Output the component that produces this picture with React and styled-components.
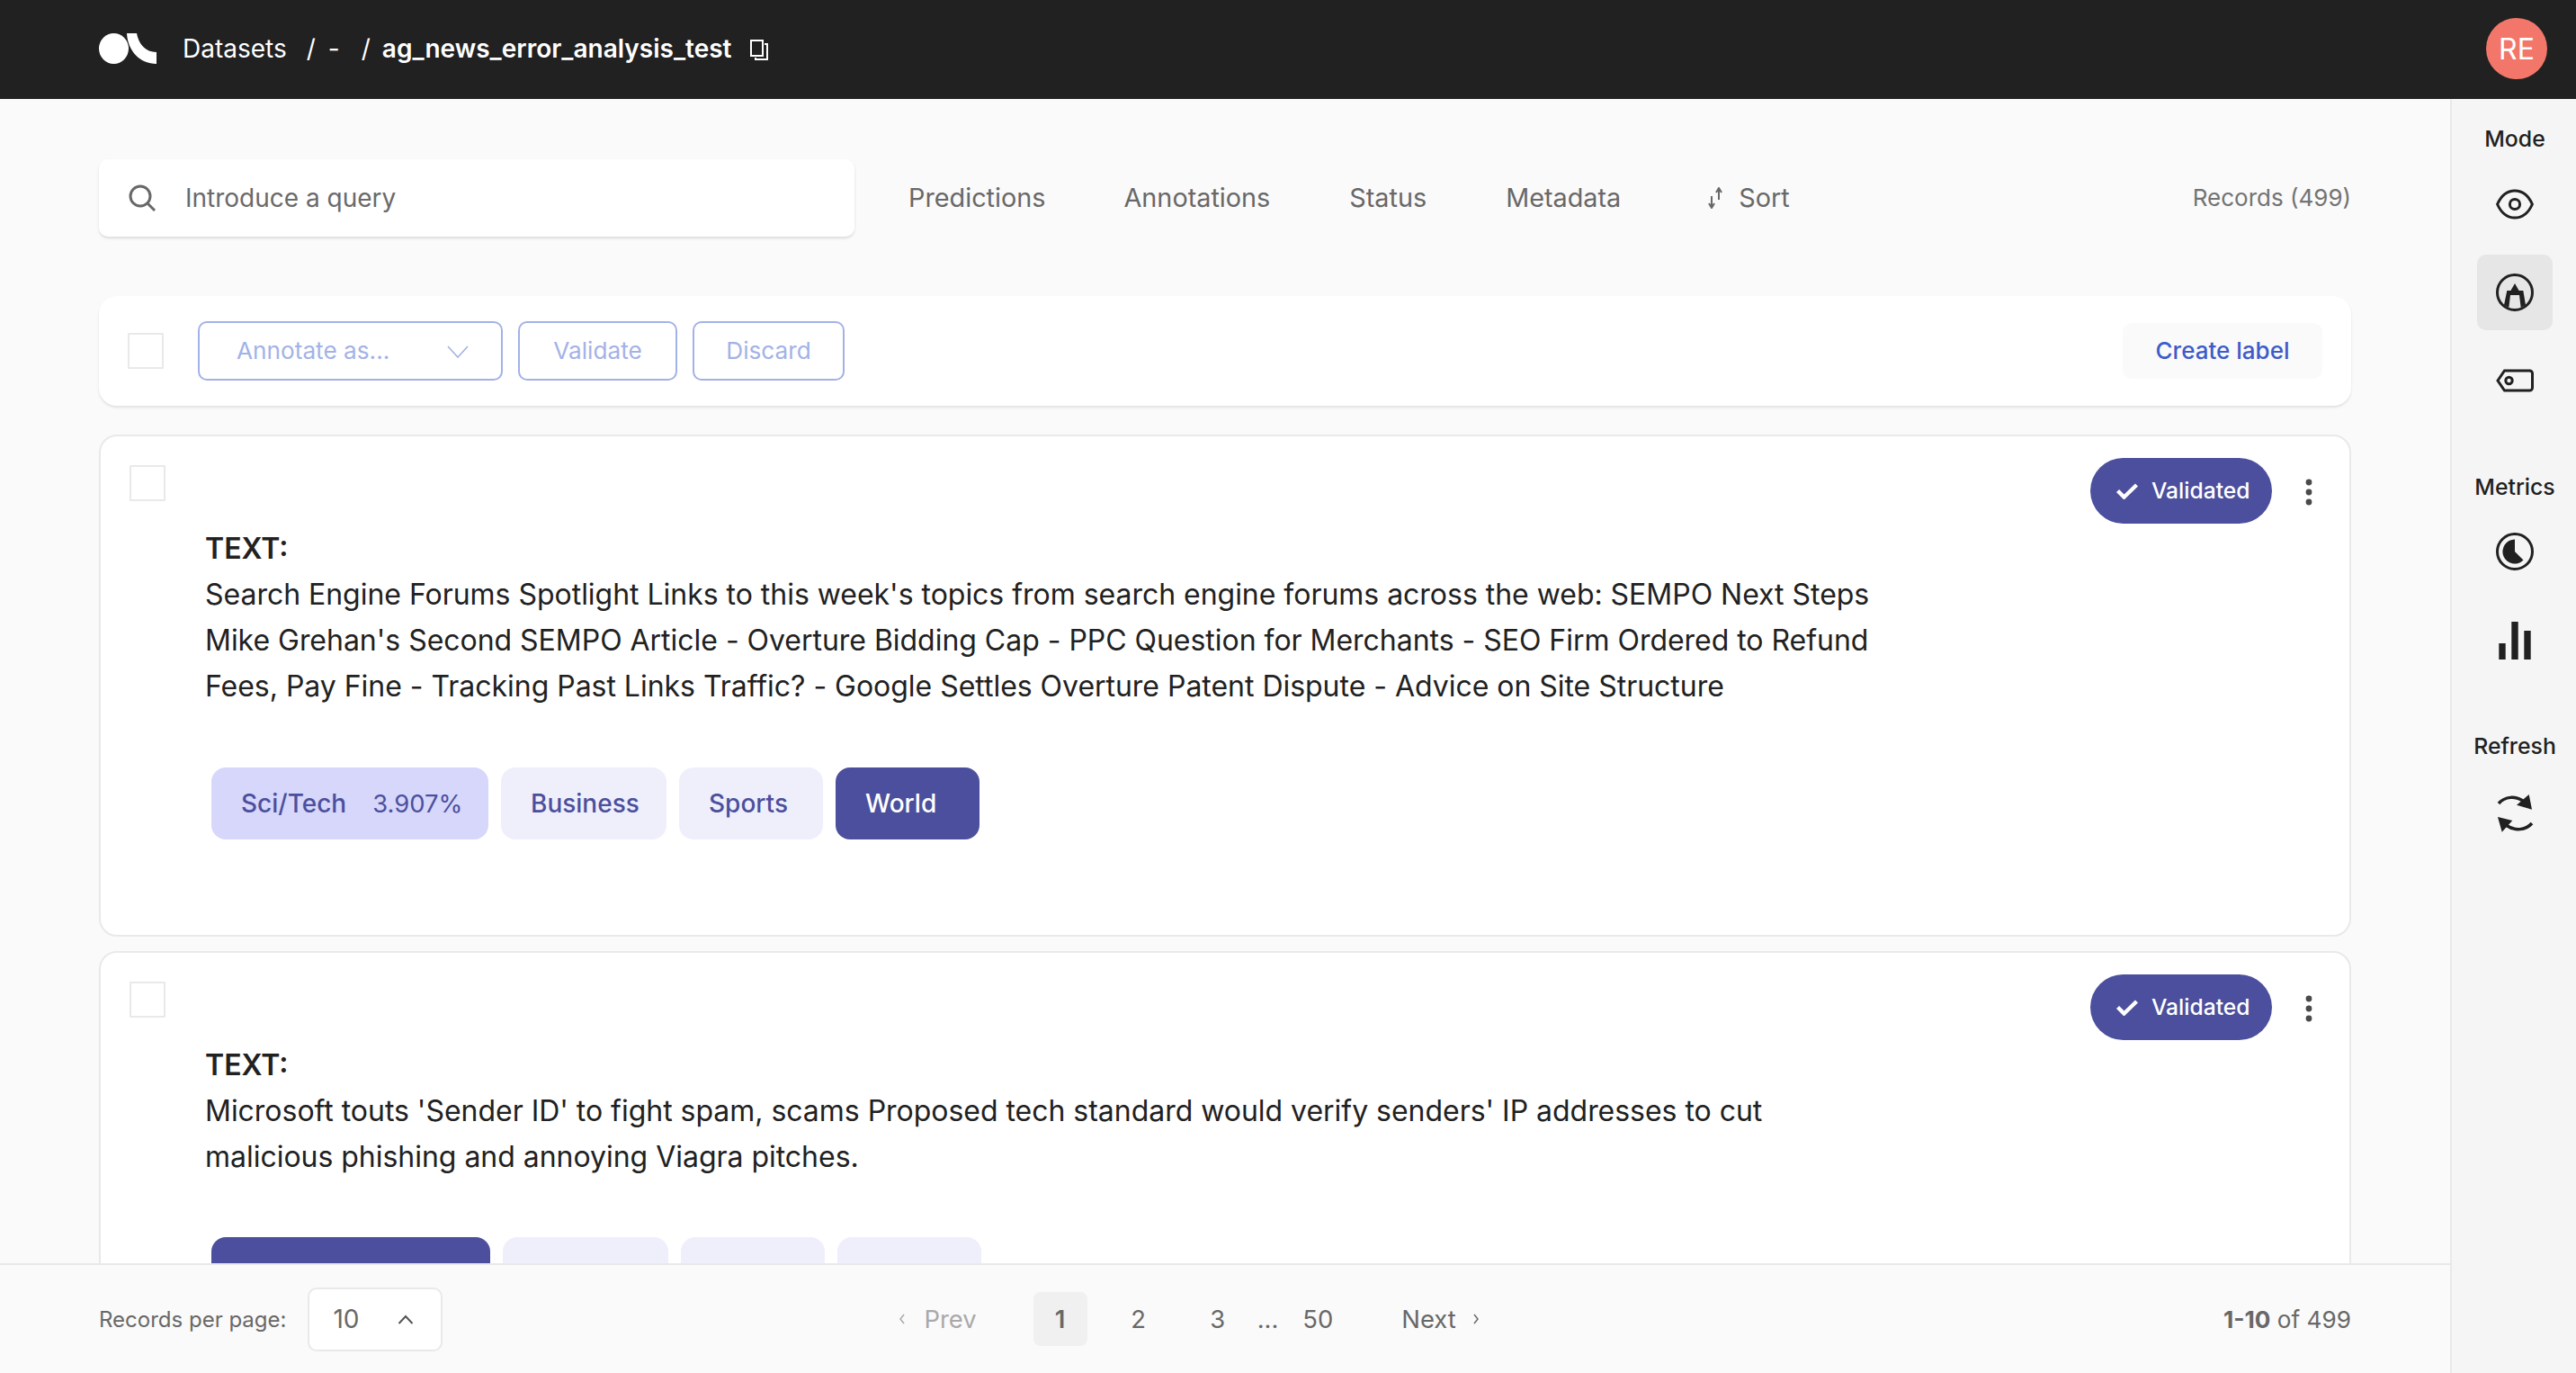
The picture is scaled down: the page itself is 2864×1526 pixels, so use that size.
import React from 'react';
import styled, { createGlobalStyle } from 'styled-components';

const Global = createGlobalStyle`
  html, body { margin: 0; padding: 0; height: 100%; background: #fafafa; }
  * { box-sizing: border-box; }
  body { font-family: Inter, "Noto Sans", sans-serif; color: #212121; -webkit-font-smoothing: antialiased; }
`;

const Page = styled.div`
  height: 100vh;
  display: flex;
  flex-direction: column;
  overflow: hidden;
`;
const TopBar = styled.header`
  height: 110px;
  flex: none;
  background: #212121;
  color: #fff;
  display: flex;
  align-items: center;
  padding: 0 32px 2px 110px;
`;
const Logo = styled.svg`
  width: 65px;
  height: 34px;
  flex: none;
`;
const Crumbs = styled.nav`
  display: flex;
  align-items: center;
  margin-left: 28px;
  font-size: 28px;
  line-height: 34px;
  color: #fff;
`;
const Sep = styled.span`
  margin: 0 ${(p) => p.$right}px 0 ${(p) => p.$left}px;
  font-weight: 400;
`;
const Current = styled.strong`
  font-weight: 600;
`;
const CopyIcon = styled.svg`
  width: 20px;
  height: 23px;
  margin: 2px 0 0 20px;
`;
const Avatar = styled.div`
  margin-left: auto;
  width: 68px;
  height: 68px;
  border-radius: 50%;
  background: #f2776a;
  color: #fff;
  display: flex;
  align-items: center;
  justify-content: center;
  font-size: 32px;
`;
const Body = styled.div`
  flex: 1;
  min-height: 0;
  display: flex;
`;
const Main = styled.main`
  flex: 1;
  min-width: 0;
  display: flex;
  flex-direction: column;
`;
const Scroll = styled.div`
  flex: 1;
  min-height: 0;
  overflow: hidden;
  padding: 67px 110px 0;
`;
const FilterRow = styled.div`
  display: flex;
  align-items: center;
  height: 86px;
  color: #686868;
  font-size: 28.8px;
`;
const Search = styled.div`
  width: 840px;
  height: 86px;
  flex: none;
  background: #fff;
  border-radius: 10px;
  box-shadow: 0 2px 3px rgba(0, 0, 0, 0.12);
  display: flex;
  align-items: center;
  padding-left: 32px;
  color: #6a6a6a;
  font-size: 28px;
`;
const SearchIcon = styled.svg`
  width: 32px;
  height: 32px;
  margin-right: 32px;
`;
const Filter = styled.span`
  margin-left: ${(p) => p.$left}px;
  padding-bottom: 2px;
  display: inline-flex;
  align-items: center;
`;
const SortIcon = styled.svg`
  width: 18px;
  height: 24px;
  margin: 2px 17px 0 0;
`;
const RecordCount = styled.span`
  margin-left: auto;
  padding-bottom: 2px;
  font-size: 26px;
  color: #737373;
`;
const Toolbar = styled.section`
  margin-top: 66px;
  height: 122px;
  background: #fff;
  border-radius: 20px;
  box-shadow: 0 2px 3px rgba(0, 0, 0, 0.1);
  display: flex;
  align-items: center;
  padding: 0 32px;
`;
const Check = styled.span`
  display: block;
  width: 40px;
  height: 40px;
  flex: none;
  background: #fff;
  border: 2px solid #e9e9e9;
  border-radius: 1px;
`;
const OutlineBtn = styled.div`
  height: 66px;
  width: ${(p) => p.$w}px;
  margin-left: ${(p) => p.$left}px;
  border: 2px solid #a3b2e6;
  border-radius: 10px;
  color: #a3b2e6;
  font-size: 26.2px;
  display: flex;
  align-items: center;
  justify-content: ${(p) => (p.$between ? 'space-between' : 'center')};
  padding: ${(p) => (p.$between ? '0 36px 2px 41px' : '0 0 2px')};
`;
const DownCaret = styled.svg`
  width: 24px;
  height: 14px;
  margin-top: 4px;
`;
const UpCaret = styled.svg`
  width: 18px;
  height: 11px;
`;
const CreateLabel = styled.div`
  margin-left: auto;
  width: 222px;
  height: 62px;
  background: #fafafa;
  border-radius: 10px;
  color: #3e5cc9;
  font-size: 26px;
  font-weight: 500;
  display: flex;
  align-items: center;
  justify-content: center;
  padding-bottom: 2px;
`;
const Card = styled.article`
  margin-top: ${(p) => p.$top}px;
  height: ${(p) => p.$h}px;
  background: #fff;
  border: 2px solid #e9e9e9;
  border-radius: 20px;
  padding: 32px 30px 0 32px;
  display: grid;
  grid-template-columns: 40px 1fr auto;
  grid-template-rows: auto auto;
  align-content: start;
`;
const CardRight = styled.div`
  grid-column: 3;
  grid-row: 1;
  display: flex;
  align-items: flex-start;
  margin-top: -8px;
`;
const Status = styled.div`
  width: 202px;
  height: 73px;
  border-radius: 37px;
  background: #4c4f9d;
  color: #fff;
  font-size: 24.6px;
  font-weight: 500;
  display: flex;
  align-items: center;
  padding: 0 0 2px 29px;
`;
const CheckMark = styled.svg`
  width: 24px;
  height: 18px;
  margin: 2px 15px 0 0;
`;
const Dots = styled.svg`
  width: 8px;
  height: 30px;
  margin: 23px 11px 0 37px;
`;
const Record = styled.div`
  grid-column: 1 / -1;
  grid-row: 2;
  margin-top: 2px;
  padding-left: 84px;
`;
const Label = styled.div`
  font-weight: 600;
  font-size: 32px;
  line-height: 51px;
`;
const Text = styled.p`
  margin: 0;
  width: 1880px;
  font-size: 32px;
  line-height: 51.2px;
  letter-spacing: -0.025px;
  color: #212121;
`;
const Tags = styled.div`
  display: flex;
  gap: 14px;
  margin: 64px 0 0 7px;
`;
const Tag = styled.div`
  height: 80px;
  width: ${(p) => p.$w}px;
  flex: none;
  border-radius: 16px;
  background: ${(p) => (p.$state === 'on' ? '#4c4f9d' : p.$state === 'pred' ? '#d6d7fb' : '#eeeffb')};
  color: ${(p) => (p.$state === 'on' ? '#fff' : '#4c4f9d')};
  font-size: 28px;
  font-weight: 500;
  display: flex;
  align-items: center;
  gap: 29px;
  padding-left: 33px;
`;
const Score = styled.span`
  font-size: 27.4px;
  font-weight: 400;
`;
const Footer = styled.footer`
  flex: none;
  height: 122px;
  border-top: 2px solid #e9e9e9;
  background: #fafafa;
  display: flex;
  align-items: center;
  padding: 0 110px;
  color: #686868;
  font-size: 27.4px;
`;
const PerPage = styled.span`
  font-size: 24px;
`;
const PerSelect = styled.div`
  margin-left: 24px;
  width: 150px;
  height: 71px;
  background: #fff;
  border: 2px solid #e9e9e9;
  border-radius: 10px;
  display: flex;
  align-items: center;
  justify-content: space-between;
  padding: 0 30px 0 26px;
  font-size: 28px;
`;
const Pager = styled.div`
  display: flex;
  align-items: center;
  margin-left: 507px;
`;
const PagerLink = styled.span`
  display: inline-flex;
  align-items: center;
  color: ${(p) => (p.$off ? '#a9a9a9' : '#686868')};
  margin-left: ${(p) => p.$left || 0}px;
`;
const PageNo = styled.span`
  width: 60px;
  height: 60px;
  margin-left: ${(p) => p.$left || 0}px;
  border-radius: 8px;
  display: flex;
  align-items: center;
  justify-content: center;
  background: ${(p) => (p.$on ? '#f0f0f0' : 'transparent')};
  font-weight: ${(p) => (p.$on ? 600 : 400)};
`;
const SmallChevron = styled.svg`
  width: 8px;
  height: 12px;
  margin: ${(p) => (p.$after ? '0 0 0 18px' : '0 20px 0 0')};
`;
const Range = styled.span`
  margin-left: auto;
  font-size: 26.2px;
  b { font-weight: 700; }
`;
const Side = styled.aside`
  flex: none;
  width: 140px;
  background: #f5f5f5;
  border-left: 2px solid #e9e9e9;
  display: flex;
  flex-direction: column;
  align-items: center;
  padding: 30px 0 0 2px;
`;
const SideTitle = styled.div`
  font-size: 24.8px;
  font-weight: 500;
  line-height: 28px;
  margin-top: ${(p) => p.$top || 0}px;
`;
const SideBtn = styled.div`
  width: 84px;
  height: 84px;
  flex: none;
  margin-top: ${(p) => p.$top || 0}px;
  border-radius: 10px;
  background: ${(p) => (p.$on ? '#e6e6e6' : 'transparent')};
  display: flex;
  align-items: center;
  justify-content: center;
`;
const SideIcon = styled.svg`
  width: 42px;
  height: 42px;
  color: #212121;
  display: block;
`;

function Item({ top, h, text, tags }) {
  return (
    <Card $top={top} $h={h}>
      <Check />
      <CardRight>
        <Status>
          <CheckMark viewBox="0 0 24 18" fill="none" stroke="#fff" strokeWidth="4.4">
            <path d="M1.5 8.5l7 7L22.5 2" />
          </CheckMark>
          Validated
        </Status>
        <Dots viewBox="0 0 8 30" fill="#4a4a4a">
          <circle cx="4" cy="4" r="3.4" />
          <circle cx="4" cy="15" r="3.4" />
          <circle cx="4" cy="26" r="3.4" />
        </Dots>
      </CardRight>
      <Record>
        <Label>TEXT:</Label>
        <Text>{text}</Text>
        <Tags>
          {tags.map((t) => (
            <Tag key={t.id} $w={t.w} $state={t.state}>
              {t.name}
              {t.score && <Score>{t.score}</Score>}
            </Tag>
          ))}
        </Tags>
      </Record>
    </Card>
  );
}

export default function App() {
  return (
    <Page>
      <Global />
      <TopBar>
        <Logo viewBox="0 0 65 34">
          <ellipse cx="16.5" cy="17" rx="16.5" ry="17" fill="#fff" />
          <path d="M31 0h11C44 12 52 21 64 21V34C46 34 32 20 31 0z" fill="#fff" />
        </Logo>
        <Crumbs>
          <span>Datasets</span>
          <Sep $left={22} $right={14}>/</Sep>
          <span>-</span>
          <Sep $left={24} $right={13}>/</Sep>
          <Current>ag_news_error_analysis_test</Current>
          <CopyIcon viewBox="0 0 20 23" fill="none" stroke="#fff" strokeWidth="2">
            <rect x="1" y="1" width="13" height="17" />
            <path d="M16 5h3v17H6v-2" />
          </CopyIcon>
        </Crumbs>
        <Avatar>RE</Avatar>
      </TopBar>
      <Body>
        <Main>
          <Scroll>
            <FilterRow>
              <Search>
                <SearchIcon viewBox="0 0 32 32" fill="none" stroke="#686868" strokeWidth="3">
                  <circle cx="14" cy="14" r="11" />
                  <path d="M22 22l8 8" />
                </SearchIcon>
                Introduce a query
              </Search>
              <Filter $left={60}>Predictions</Filter>
              <Filter $left={87}>Annotations</Filter>
              <Filter $left={88}>Status</Filter>
              <Filter $left={88}>Metadata</Filter>
              <Filter $left={96}>
                <SortIcon viewBox="0 0 18 24" fill="none" stroke="#686868" strokeWidth="2">
                  <path d="M5 10v12M2 18l3 5 3-5M13 14V2M10 6l3-5 3 5" />
                </SortIcon>
                Sort
              </Filter>
              <RecordCount>Records (499)</RecordCount>
            </FilterRow>
            <Toolbar>
              <Check />
              <OutlineBtn $w={339} $left={38} $between>
                Annotate as...
                <DownCaret viewBox="0 0 24 14" fill="none" stroke="#a3b2e6" strokeWidth="1.6">
                  <path d="M1 1l11 12L23 1" />
                </DownCaret>
              </OutlineBtn>
              <OutlineBtn $w={177} $left={17}>Validate</OutlineBtn>
              <OutlineBtn $w={169} $left={17}>Discard</OutlineBtn>
              <CreateLabel>Create label</CreateLabel>
            </Toolbar>
            <Item
              top={32}
              h={558}
              text="Search Engine Forums Spotlight Links to this week's topics from search engine forums across the web: SEMPO Next Steps Mike Grehan's Second SEMPO Article - Overture Bidding Cap - PPC Question for Merchants - SEO Firm Ordered to Refund Fees, Pay Fine - Tracking Past Links Traffic? - Google Settles Overture Patent Dispute - Advice on Site Structure"
              tags={[
                { id: 'sci', name: 'Sci/Tech', score: '3.907%', w: 308, state: 'pred' },
                { id: 'bus', name: 'Business', w: 184 },
                { id: 'spo', name: 'Sports', w: 160 },
                { id: 'wor', name: 'World', w: 160, state: 'on' },
              ]}
            />
            <Item
              top={16}
              h={558}
              text="Microsoft touts 'Sender ID' to fight spam, scams Proposed tech standard would verify senders' IP addresses to cut malicious phishing and annoying Viagra pitches."
              tags={[
                { id: 'a', w: 310, state: 'on' },
                { id: 'b', w: 184 },
                { id: 'c', w: 160 },
                { id: 'd', w: 160 },
              ]}
            />
          </Scroll>
          <Footer>
            <PerPage>Records per page:</PerPage>
            <PerSelect>
              10
              <UpCaret viewBox="0 0 18 11" fill="none" stroke="#555" strokeWidth="2">
                <path d="M1.5 10L9 2l7.5 8" />
              </UpCaret>
            </PerSelect>
            <Pager>
              <PagerLink $off>
                <SmallChevron viewBox="0 0 8 12" fill="none" stroke="#a9a9a9" strokeWidth="1.5">
                  <path d="M6 1L2 6l4 5" />
                </SmallChevron>
                Prev
              </PagerLink>
              <PageNo $on $left={63}>1</PageNo>
              <PageNo $left={27}>2</PageNo>
              <PageNo $left={28}>3</PageNo>
              <PagerLink $left={14}>...</PagerLink>
              <PagerLink $left={27}>50</PagerLink>
              <PagerLink $left={76}>
                Next
                <SmallChevron $after viewBox="0 0 8 12" fill="none" stroke="#686868" strokeWidth="1.5">
                  <path d="M2 1l4 5-4 5" />
                </SmallChevron>
              </PagerLink>
            </Pager>
            <Range><b>1-10</b> of 499</Range>
          </Footer>
        </Main>
        <Side>
          <SideTitle>Mode</SideTitle>
          <SideBtn $top={17}>
            <SideIcon viewBox="0 0 42 42" fill="none" stroke="currentColor" strokeWidth="3">
              <path d="M1.6 21C6 11 13 6 21 6s15 5 19.4 15C36 31 29 36 21 36S6 31 1.6 21z" />
              <circle cx="21" cy="21" r="5.6" />
            </SideIcon>
          </SideBtn>
          <SideBtn $top={14} $on>
            <SideIcon viewBox="0 0 42 42" fill="none">
              <circle cx="21" cy="21" r="19.5" stroke="currentColor" strokeWidth="3" />
              <path
                fillRule="evenodd"
                fill="currentColor"
                d="M21 11l4.6 8h4.7L33 35l-5.3 3L26 24H16l-1.7 14L9 35l3.3-16h4.1z"
              />
            </SideIcon>
          </SideBtn>
          <SideBtn $top={14}>
            <SideIcon viewBox="0 0 42 42" fill="none" stroke="currentColor" strokeWidth="3">
              <path d="M2 21l7.5-11H37.5a3 3 0 0 1 3 3v16a3 3 0 0 1-3 3H9.5z" />
              <circle cx="14.5" cy="21" r="3.7" />
            </SideIcon>
          </SideBtn>
          <SideTitle $top={62}>Metrics</SideTitle>
          <SideBtn $top={16}>
            <SideIcon viewBox="0 0 42 42" fill="none">
              <circle cx="21" cy="21" r="19.5" stroke="currentColor" strokeWidth="3" />
              <path d="M21 7.5V21l9.5 9.5A13.5 13.5 0 1 1 21 7.5z" fill="currentColor" />
            </SideIcon>
          </SideBtn>
          <SideBtn $top={15}>
            <SideIcon viewBox="0 0 42 42" fill="currentColor">
              <rect x="3.3" y="24" width="7.4" height="18" />
              <rect x="17.3" y="0" width="7.4" height="42" />
              <rect x="31.3" y="10" width="7.4" height="32" />
            </SideIcon>
          </SideBtn>
          <SideTitle $top={61}>Refresh</SideTitle>
          <SideBtn $top={19}>
            <SideIcon viewBox="0 0 42 42" fill="none">
              <path d="M3 10C10 2 22 1 31 8" stroke="currentColor" strokeWidth="3.5" />
              <path d="M36.7 0L40 16.7 23 11.7z" fill="currentColor" />
              <path d="M40 32C33 40 21 41 11 34" stroke="currentColor" strokeWidth="3.5" />
              <path d="M2 25l4.7 16.7L18.3 29z" fill="currentColor" />
            </SideIcon>
          </SideBtn>
        </Side>
      </Body>
    </Page>
  );
}
